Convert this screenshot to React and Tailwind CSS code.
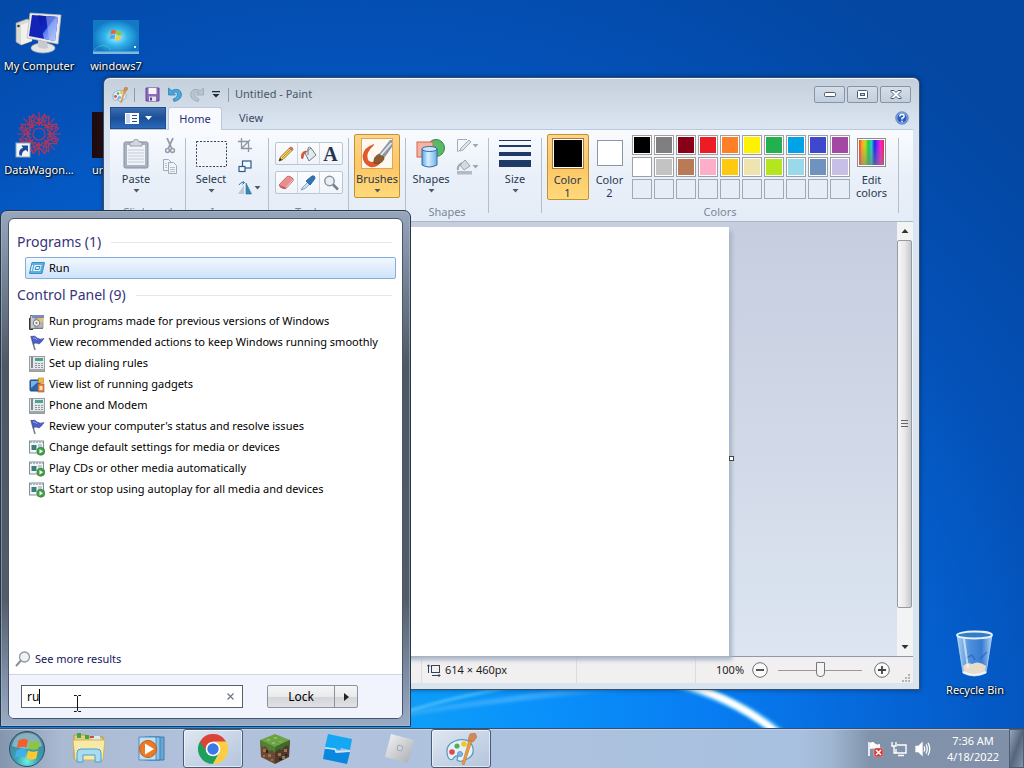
import React, { useState } from "react";

const topColors = ["#000000", "#7f7f7f", "#880015", "#ed1c24", "#ff7f27", "#fff200", "#22b14c", "#00a2e8", "#3f48cc", "#a349a4"];
const midColors = ["#ffffff", "#c3c3c3", "#b97a57", "#ffaec9", "#ffc90e", "#efe4b0", "#b5e61d", "#99d9ea", "#7092be", "#c8bfe7"];

const results = [
  { icon: "compat", text: "Run programs made for previous versions of Windows" },
  { icon: "flag", text: "View recommended actions to keep Windows running smoothly" },
  { icon: "phone", text: "Set up dialing rules" },
  { icon: "gadget", text: "View list of running gadgets" },
  { icon: "phone", text: "Phone and Modem" },
  { icon: "flag", text: "Review your computer's status and resolve issues" },
  { icon: "autoplay", text: "Change default settings for media or devices" },
  { icon: "autoplay", text: "Play CDs or other media automatically" },
  { icon: "autoplay", text: "Start or stop using autoplay for all media and devices" },
];

function Wallpaper() {
  return (
    <svg className="absolute inset-0 h-full w-full" viewBox="0 0 1024 728" preserveAspectRatio="none" aria-hidden="true">
      <defs>
        <radialGradient id="glow" gradientUnits="userSpaceOnUse" cx="360" cy="760" r="900">
          <stop offset="0" stopColor="#10a4f6" />
          <stop offset=".18" stopColor="#0a94fb" />
          <stop offset=".4" stopColor="#087cf2" />
          <stop offset=".62" stopColor="#0562d2" />
          <stop offset=".8" stopColor="#0450b6" />
          <stop offset="1" stopColor="#0347a2" />
        </radialGradient>
        <filter id="soft"><feGaussianBlur stdDeviation="1.4" /></filter>
        <linearGradient id="streak" x1="0" y1="0" x2="1" y2="0">
          <stop offset="0" stopColor="#fff" stopOpacity=".1" />
          <stop offset=".5" stopColor="#fff" stopOpacity=".2" />
          <stop offset="1" stopColor="#fff" stopOpacity="0" />
        </linearGradient>
      </defs>
      <rect width="1024" height="728" fill="url(#glow)" />
      <path d="M400 718 Q500 700 640 690 L560 690 Q480 700 400 712 Z" fill="url(#streak)" filter="url(#soft)" />
      <path d="M405 712 Q450 698 510 687" fill="none" stroke="#8be0ff" strokeWidth="2" opacity=".7" filter="url(#soft)" />
      <path d="M670 682 Q735 697 782 735" fill="none" stroke="#4fc4ff" strokeWidth="11" opacity=".6" filter="url(#soft)" />
      <path d="M672 681 Q735 697 780 735" fill="none" stroke="#fff" strokeWidth="7" filter="url(#soft)" />
    </svg>
  );
}

function ComputerIcon() {
  return (
    <svg width="48" height="44" viewBox="0 0 48 44">
      <defs>
        <linearGradient id="scr" x1="0" y1="0" x2="1" y2="1">
          <stop offset="0" stopColor="#0a19a0" /><stop offset=".45" stopColor="#1226c4" /><stop offset=".5" stopColor="#5b7cf0" /><stop offset="1" stopColor="#c3d4ff" />
        </linearGradient>
      </defs>
      <path d="M1 13 L12 9 L17 11 V31 L6 35 L1 32Z" fill="#d9dad6" stroke="#8b8f94" strokeWidth=".7" />
      <path d="M6 15 L17 11 V31 L6 35Z" fill="#f2f1ec" />
      <circle cx="3.5" cy="16" r="1.3" fill="#3a3a3a" />
      <ellipse cx="28" cy="38" rx="12" ry="5" fill="#e3e4e6" stroke="#a4a8ae" strokeWidth=".7" />
      <path d="M23 30 L32 31 L33 38 Q28 40 23 37Z" fill="#c8cace" />
      <path d="M15 3 L46 5 L43 34 L12 28Z" fill="#eceae4" stroke="#b5b7ba" strokeWidth=".7" />
      <path d="M17 5 L43 7 L40 31 L14 26Z" fill="#1424b8" />
      <path d="M23 5.500 L43 7 L40 31 L29 29Z" fill="url(#scr)" />
      <path d="M31 6 L43 7 L40 31 L34 30Z" fill="#aec4fb" opacity=".5" />
    </svg>
  );
}

function WinFlag({ x = 0, y = 0, s = 1 }) {
  return (
    <g transform={`translate(${x} ${y}) scale(${s})`}>
      <path d="M2 3 Q6 0 10 2.500 L8.800 9 Q5 7 .8 9.500Z" fill="#f2602b" />
      <path d="M11.500 3 Q16 5 20 3 L18.500 10 Q14.500 11.500 10.300 9.500Z" fill="#8cc63f" />
      <path d="M.5 11 Q5 8.500 8.500 10.800 L7.300 17 Q3.500 15 -1 17.500Z" fill="#3fb0ee" />
      <path d="M10 11.300 Q14 13.300 18.200 11.500 L16.800 18 Q13 20 8.700 17.700Z" fill="#fdc92d" />
    </g>
  );
}

function WinPictureIcon() {
  return (
    <svg width="46" height="34" viewBox="0 0 46 34">
      <defs>
        <radialGradient id="w7"><stop offset="0" stopColor="#b8f4ff" /><stop offset=".5" stopColor="#32b4ea" /><stop offset="1" stopColor="#1279c4" /></radialGradient>
      </defs>
      <rect width="46" height="34" fill="url(#w7)" />
      <rect y="31.500" width="46" height="2.500" fill="#7fb9dd" />
      <path d="M0 31 Q10 20 18 30" fill="none" stroke="#7fe" opacity=".3" />
      <WinFlag x={17} y={9} s={0.6} />
      <rect x="41" y="26" width="2" height="2" fill="#d8f0fa" />
    </svg>
  );
}

function DataWagonIcon() {
  const petals = [0, 45, 90, 135, 180, 225, 270, 315];
  return (
    <svg width="52" height="50" viewBox="0 0 52 50">
      <g fill="none" stroke="#b0365a" strokeWidth="1.200">
        {petals.map((a) => (
          <g key={a} transform={`rotate(${a} 26 26)`}>
            <path d="M26 13 L20 6 M26 13 L32 6 M26 4 V18 M21 10 L16 8 M31 10 L36 8" />
            <path d="M26 16 L18 12 L20 20 M26 16 L34 12" />
            <path d="M22 18 Q26 10 30 18" />
          </g>
        ))}
        <circle cx="26" cy="26" r="6" />
      </g>
      <rect x="3" y="35" width="14" height="14" fill="#f2f5f8" stroke="#9aa7b5" />
      <path d="M6.500 47.500 Q5 41 10 40 L8.500 37.500 H15 V44 L13 42 Q8.500 43 9 47.500Z" fill="#1a4a9c" />
    </svg>
  );
}

function BinIcon() {
  return (
    <svg width="40" height="48" viewBox="0 0 40 48">
      <defs>
        <linearGradient id="bin" x1="0" x2="1"><stop offset="0" stopColor="#d5ebfa" stopOpacity=".8" /><stop offset=".35" stopColor="#6ea8e4" stopOpacity=".7" /><stop offset=".7" stopColor="#4b8ad6" stopOpacity=".7" /><stop offset="1" stopColor="#d8ecfb" stopOpacity=".85" /></linearGradient>
      </defs>
      <path d="M2 5 L8 43 Q19 49 31 43 L37 5Z" fill="url(#bin)" stroke="#b5d8f2" strokeWidth=".8" />
      <path d="M8 36 Q12 32 17 34 Q24 30 31 36 L30 43 Q19 48 9 43Z" fill="#e5dccb" />
      <path d="M11 28 L17 25 L20 30 M25 29 L32 22" stroke="#2f60c0" strokeWidth="1.500" fill="none" opacity=".7" />
      <path d="M8 42 Q19 48 31 42" fill="none" stroke="#ecf6fc" strokeWidth="2" />
      <path d="M9 9 L13 38" stroke="#fff" opacity=".6" strokeWidth="2" />
      <ellipse cx="19.500" cy="5" rx="17.500" ry="3.500" fill="#347cc4" stroke="#e2f1fa" strokeWidth="1.800" />
    </svg>
  );
}

function DesktopIcon({ place, label, children }) {
  return (
    <button className={`absolute flex flex-col gap-1 text-[11px] leading-4 whitespace-nowrap text-white [text-shadow:1px_1px_2px_#000,0_0_2px_#000] ${place}`}>
      <span className="flex h-12 items-end">{children}</span>
      {label}
    </button>
  );
}

function Palette({ size = 20 }) {
  return (
    <svg width={size} height={size} viewBox="0 0 32 32">
      <path d="M3 24 Q-1 12 10 8 Q22 4 27 12 Q31 22 22 26 Q15 30 12 27 L13 23 Q10 22 8 26 Q5 28 3 24Z" fill="#e4f1fa" stroke="#5c98b8" strokeWidth="1.200" />
      <circle cx="7" cy="19" r="2.800" fill="#dd4b46" />
      <circle cx="12" cy="13" r="2.600" fill="#51b05a" />
      <circle cx="19" cy="11" r="2.800" fill="#efc62c" />
      <circle cx="15" cy="21" r="2.600" fill="#7eb3e6" stroke="#4a82b8" strokeWidth=".6" />
      <path d="M27 8 L19 32 L17 31 L24 7Z" fill="#ec9a3c" stroke="#b9702a" strokeWidth=".5" />
      <path d="M23 7 L25 1 L30 0 L32 4 L28 9Z" fill="#d58a55" stroke="#a9633a" strokeWidth=".5" />
    </svg>
  );
}

function Down({ className = "" }) {
  return <svg className={className} width="7" height="4" viewBox="0 0 7 4"><path d="M.5 0H6.500L3.500 3.500Z" fill="#4b5a70" /></svg>;
}

function TitleBar() {
  const caption = "grid h-[17px] w-[31px] place-items-center rounded-[2px] border border-[#8794a5] bg-gradient-to-b from-[#d3dee9] to-[#c2cedc]";
  return (
    <div className="flex h-[29px] items-center pt-1 pr-0.5 pl-0.5">
      <Palette size={16} />
      <span className="mx-1.5 h-3.5 w-px bg-[#8e9aa8]" />
      <button aria-label="Save" className="mr-2 ml-1">
        <svg width="15" height="15" viewBox="0 0 15 15">
          <path d="M1 1H14V14H1Z" fill="#8d6bb8" stroke="#65458f" />
          <rect x="3.500" y="1" width="8" height="6" fill="#f4f4fb" /><rect x="4" y="9.500" width="7" height="4.500" fill="#dfe5ee" /><rect x="5" y="10.500" width="2" height="3" fill="#5d4385" />
        </svg>
      </button>
      <button aria-label="Undo" className="mr-2">
        <svg width="14" height="15" viewBox="0 0 14 15"><path d="M.5 1V8H7.500L5 5.500Q9.500 4 9.500 8Q9 11 5 12L6 14.500Q13.500 13 13.500 7Q12 0 3.500 3.500Z" fill="#46a8dc" stroke="#2579ab" strokeWidth=".7" /></svg>
      </button>
      <button aria-label="Redo" className="mr-2">
        <svg width="14" height="15" viewBox="0 0 14 15"><path d="M13.500 1V8H6.500L9 5.500Q4.500 4 4.500 8Q5 11 9 12L8 14.500Q.5 13 .5 7Q2 0 10.500 3.500Z" fill="#b9c5d0" stroke="#94a3b2" strokeWidth=".7" /></svg>
      </button>
      <button aria-label="Customize toolbar" className="mr-2">
        <svg width="8" height="7" viewBox="0 0 8 7"><path d="M0 0H8V1.200H0ZM.5 3H7.500L4 6.500Z" fill="#1d2a3c" /></svg>
      </button>
      <span className="mr-1.5 h-3.5 w-px bg-[#8e9aa8]" />
      <h1 className="flex-1 text-[11px] text-[#47566a]">Untitled - Paint</h1>
      <div className="flex gap-0.5">
        <button aria-label="Minimize" className={caption}>
          <svg width="12" height="5" viewBox="0 0 12 5"><rect x=".5" y=".5" width="11" height="4" rx="1" fill="#fff" stroke="#4c5a6f" /></svg>
        </button>
        <button aria-label="Maximize" className={caption}>
          <svg width="11" height="9" viewBox="0 0 11 9"><rect x=".5" y=".5" width="10" height="8" rx="1" fill="#fff" stroke="#4c5a6f" /><rect x="3.500" y="3.500" width="4" height="2" fill="#c7d2df" stroke="#4c5a6f" /></svg>
        </button>
        <button aria-label="Close" className={caption}>
          <svg width="12" height="9" viewBox="0 0 12 9"><path d="M1 .5H4L6 2.500L8 .5H11V1.500L8 4.500L11 7.500V8.500H8L6 6.500L4 8.500H1V7.500L4 4.500L1 1.500Z" fill="#fff" stroke="#4c5a6f" /></svg>
        </button>
      </div>
    </div>
  );
}

function Tabs() {
  return (
    <div className="flex h-[23px] items-stretch border-b border-[#bac9db] text-[11px]">
      <button aria-label="Paint menu" className="flex w-14 items-center justify-center gap-1.5 border border-[#1f4e8c] bg-gradient-to-b from-[#3c6db0] via-[#1b4f98] to-[#2b68b8]">
        <svg width="14" height="11" viewBox="0 0 14 11"><rect width="14" height="11" fill="#fff" /><rect x="1" y="1" width="4" height="9" fill="#c5d6ee" /><path d="M7 2.500H12M7 5.500H12M7 8.500H12" stroke="#27528e" /></svg>
        <svg width="7" height="4" viewBox="0 0 7 4"><path d="M0 0H7L3.500 4Z" fill="#fff" /></svg>
      </button>
      <button className="mx-0.5 -mb-px w-[54px] rounded-t-[3px] border border-b-0 border-[#bac9db] bg-[#f8fafd] text-[#26307a]">Home</button>
      <button className="w-[54px] text-[#3c4a5e]">View</button>
      <button aria-label="Help" className="mr-1 ml-auto self-center">
        <svg width="14" height="14" viewBox="0 0 14 14">
          <circle cx="7" cy="7" r="6.300" fill="#2a5fc0" stroke="#7b9bd0" /><circle cx="7" cy="7" r="5.200" fill="none" stroke="#dce8fa" strokeWidth=".6" />
          <path d="M4.800 5.500Q5 3.300 7 3.300Q9.300 3.400 9.100 5.300Q8.900 6.500 7 7.300V8.600M7 9.800V11.200" fill="none" stroke="#fff" strokeWidth="1.500" />
        </svg>
      </button>
    </div>
  );
}

function Group({ label, width, align = "justify-center", children }) {
  return (
    <section aria-label={label} className={`flex flex-col justify-between ${width}`}>
      <div className={`flex ${align}`}>{children}</div>
      <div className="h-[18px] text-center text-[11px] leading-[18px] text-[#7a8798]">{label}</div>
    </section>
  );
}

function Sep() {
  return <span className="mt-1 mb-2 w-px bg-[#b4bfcd]" />;
}

function BigButton({ label, icon, arrow = true, width = "w-[46px]", active = false }) {
  const look = active ? "border-[#c2922f] bg-gradient-to-b from-[#fcd48a] via-[#fdc766] to-[#ffd97a]" : "border-transparent";
  return (
    <button className={`flex h-16 flex-col items-center rounded-[2px] border text-[11px] leading-[13px] text-[#28394f] ${width} ${look}`}>
      <span className="grid h-[37px] w-full shrink-0 place-items-center">{icon}</span>
      <span>{label}</span>
      {arrow && <Down className="mt-1" />}
    </button>
  );
}

function ToolCell({ name, children }) {
  return <button aria-label={name} className="grid h-[21px] w-[22px] place-items-center">{children}</button>;
}

const toolRow = "flex divide-x divide-[#ccd6e2] rounded-[2px] border border-[#bcc6d3] bg-gradient-to-b from-[#fbfcfe] to-[#f0f4fa]";

function Swatch({ color }) {
  if (!color) return <button aria-label="Empty" className="size-5 border border-[#a0a9b4] bg-[#e6edf6]" />;
  return (
    <button aria-label={color} className="size-5 border border-[#a0a0a0] bg-white p-px">
      <span className="block size-full" style={{ backgroundColor: color }} />
    </button>
  );
}

function Ribbon() {
  return (
    <div className="flex h-[92px] items-stretch border-b border-[#a9b6c6] bg-gradient-to-b from-[#f9fbfe] via-[#eaf0f9] to-[#e4ecf7] pt-1">
      <Group label="Clipboard" width="w-[75px]" align="justify-start">
        <BigButton label="Paste" width="w-[52px]" icon={
          <svg width="26" height="30" viewBox="0 0 26 30">
            <rect x="1" y="3" width="24" height="26" rx="1.500" fill="#a9b2c0" stroke="#858f9f" />
            <rect x="4" y="6" width="18" height="20" fill="#f0f3f8" />
            <path d="M5 11H21M5 14H21M5 17H21M5 20H21M5 23H21" stroke="#c3ccd8" />
            <path d="M7 3H10Q11 0 13 0Q15 0 16 3H19V7H7Z" fill="#d3d8e0" stroke="#858f9f" strokeWidth=".8" />
          </svg>
        } />
        <div className="flex flex-col gap-1 pt-1">
          <button aria-label="Cut">
            <svg width="16" height="16" viewBox="0 0 16 16" fill="none" stroke="#929dac"><path d="M5 0L9.500 10M11 0L6.500 10" strokeWidth="1.800" /><circle cx="5.500" cy="12.500" r="1.900" strokeWidth="1.500" /><circle cx="10.500" cy="12.500" r="1.900" strokeWidth="1.500" /></svg>
          </button>
          <button aria-label="Copy">
            <svg width="16" height="17" viewBox="0 0 16 17" fill="#f1f5fa" stroke="#a0abb9"><path d="M1.500 1.500H6.500L9.500 4.500V12.500H1.500Z" /><path d="M6.500 4.500H11.500L14.500 7.500V15.500H6.500Z" /><path d="M8 9.500H13M8 11.500H13M8 13.500H13M3 5.500H5M3 7.500H5M3 9.500H5" strokeWidth=".7" /></svg>
          </button>
        </div>
      </Group>
      <Sep />
      <Group label="Image" width="w-[82px]" align="justify-start gap-0.5">
        <BigButton label="Select" width="w-[50px]" icon={
          <svg width="31" height="26" viewBox="0 0 31 26"><rect x=".5" y=".5" width="30" height="25" fill="#f2f6fb" stroke="#33415a" strokeDasharray="2 1.500" /></svg>
        } />
        <div className="flex flex-col gap-2 pt-1">
          <button aria-label="Crop">
            <svg width="14" height="14" viewBox="0 0 14 14" fill="none" stroke="#8b96a5" strokeWidth="1.300"><path d="M3.500 0V10.500H14M0 3.500H10.500V14M4 10L12 2" /></svg>
          </button>
          <button aria-label="Resize">
            <svg width="14" height="13" viewBox="0 0 14 13" fill="#f6f9fc" stroke="#2c5b8a" strokeWidth="1.200"><rect x="4.500" y="1" width="8.500" height="7" /><rect x="1" y="6.500" width="6" height="5" /></svg>
          </button>
          <button aria-label="Rotate" className="flex items-center gap-0.5">
            <svg width="14" height="14" viewBox="0 0 14 14"><path d="M6 4V13H0Z" fill="#b9c9d8" /><path d="M8 2V13H13.500Z" fill="#3a86b8" stroke="#2a6b99" strokeWidth=".6" /><path d="M1 4Q2 1 6 1.500M4.500 0L6.500 1.500L4.500 3.500" stroke="#3f72ae" fill="none" /></svg>
            <Down />
          </button>
        </div>
      </Group>
      <Sep />
      <Group label="Tools" width="w-[79px]">
        <div className="flex flex-col gap-1.5 pt-2">
          <div className={toolRow}>
            <ToolCell name="Pencil">
              <svg width="16" height="16" viewBox="0 0 16 16"><path d="M1 15L2.500 11L11.500 2L14 4.500L5 13.500Z" fill="#f5d34c" stroke="#7a5f26" strokeWidth=".8" /><path d="M11.500 2L12.500 1Q15 1 15 3.500L14 4.500Z" fill="#de6f6a" stroke="#944" strokeWidth=".5" /><path d="M1 15L2 12L4 14Z" fill="#222" /><path d="M4 12L12 4" stroke="#c4951f" /></svg>
            </ToolCell>
            <ToolCell name="Fill">
              <svg width="17" height="16" viewBox="0 0 17 16"><path d="M5 7L11 2L16 9L9 15Z" fill="#e4e9ee" stroke="#727c88" /><path d="M8 9V2Q9 0 11 2" fill="none" stroke="#727c88" /><path d="M1 12Q0 6 6 4.500L7 5.500Q4 7 3.500 12Q2.500 14 1 12Z" fill="#d6583c" /></svg>
            </ToolCell>
            <ToolCell name="Text"><span className="font-['Liberation_Serif',serif] text-[20px] leading-4 font-bold text-[#24364e]">A</span></ToolCell>
          </div>
          <div className={toolRow}>
            <ToolCell name="Eraser">
              <svg width="17" height="15" viewBox="0 0 17 15"><path d="M1 10L9 1.500Q10 1 12 1.500L15 3.500Q16 5 15 6L8 13.500Q6 14 4 13Z" fill="#ea8f8e" stroke="#b25f60" strokeWidth=".8" /><path d="M1 10L8 12.500L8 13.500Q5 14 2 12.500Z" fill="#c65f62" /><path d="M8 12.500L15.500 4.500" stroke="#fbd0cd" /></svg>
            </ToolCell>
            <ToolCell name="Pick color">
              <svg width="16" height="16" viewBox="0 0 16 16"><path d="M1 15L3 12L8 7L10 9L5 13.500Z" fill="#cfe3f5" stroke="#5a82ad" strokeWidth=".7" /><path d="M7 5L12 1Q15 0 15 3.500L11 9L10 10L6 6Z" fill="#2f74b5" stroke="#1c4f86" strokeWidth=".7" /></svg>
            </ToolCell>
            <ToolCell name="Magnifier">
              <svg width="16" height="16" viewBox="0 0 16 16"><circle cx="6.500" cy="6" r="4.700" fill="#e9eff5" stroke="#8a949f" strokeWidth="1.500" /><path d="M10 9.500L15 14.500" stroke="#777f88" strokeWidth="2.500" /></svg>
            </ToolCell>
          </div>
        </div>
      </Group>
      <Sep />
      <Group label="" width="w-[56px]">
        <BigButton label="Brushes" active icon={
          <svg width="32" height="31" viewBox="0 0 32 31">
            <rect x=".5" y=".5" width="31" height="30" fill="#fdf9f0" stroke="#d9a85c" />
            <path d="M13 6Q3 9 1.500 18Q2 26 9 29Q17 30 20 24L15 22Q11 26 7 22Q4 15 13 7Z" fill="#e0592a" />
            <path d="M13 25Q12 19 18 16Q24 16 23 21Q20 27 13 25Z" fill="#8c5c2e" stroke="#5c3a1c" strokeWidth=".6" />
            <path d="M18 16L29 2L31 2V9L24 19Z" fill="#8e98a6" /><path d="M20 17L30.500 5" stroke="#e7ebf0" strokeWidth="1.800" />
          </svg>
        } />
      </Group>
      <Sep />
      <Group label="Shapes" width="w-[82px]" align="justify-start">
        <BigButton label="Shapes" width="w-[50px]" icon={
          <svg width="30" height="29" viewBox="0 0 30 29">
            <defs><linearGradient id="cyl" x1="0" x2="1"><stop offset="0" stopColor="#5ba6e4" /><stop offset=".4" stopColor="#d9efff" /><stop offset="1" stopColor="#6cb0e6" /></linearGradient></defs>
            <circle cx="20" cy="9" r="8.500" fill="#58b967" stroke="#2c8a40" />
            <rect x="1" y="3" width="16" height="15" fill="#f4b3a3" stroke="#d4664d" />
            <path d="M6 10V26Q13 30 21 26V10Z" fill="url(#cyl)" stroke="#2f6ba6" />
            <ellipse cx="13.500" cy="10" rx="7.500" ry="2.500" fill="#c9e6fb" stroke="#2f6ba6" />
          </svg>
        } />
        <div className="flex flex-col gap-1.5 pt-1">
          <button aria-label="Outline" className="flex items-center">
            <svg width="16" height="15" viewBox="0 0 16 15" fill="none" stroke="#a3adba"><path d="M11 1.500H1.500V13.500L5 12" /><path d="M5 10L13 2L15 4L7 12L4 13Z" fill="#dde3ea" /></svg>
            <Down className="opacity-50" />
          </button>
          <button aria-label="Fill style" className="flex items-center">
            <svg width="16" height="16" viewBox="0 0 16 16"><path d="M4 6L9 1L14 7L8 11Z" fill="#d5dae1" stroke="#9aa4b1" /><path d="M2 11Q1 7 6 4" stroke="#9aa4b1" fill="none" strokeWidth="2" /><rect x="1" y="12" width="15" height="3.500" fill="#b1bac5" /></svg>
            <Down className="opacity-50" />
          </button>
        </div>
      </Group>
      <Sep />
      <Group label="" width="w-[52px]">
        <BigButton label="Size" icon={
          <svg width="32" height="27" viewBox="0 0 32 27" fill="#1f3a66"><path d="M0 0H32V1H0ZM0 5H32V7H0ZM0 12H32V16H0ZM0 20H32V27H0Z" /></svg>
        } />
      </Group>
      <Sep />
      <Group label="Colors" width="w-[356px]">
        <div className="flex">
          <div className="flex">
            <button className="flex h-[66px] w-[42px] flex-col items-center rounded-[2px] border border-[#c2922f] bg-gradient-to-b from-[#fcd48a] via-[#fdc766] to-[#ffd97a] pt-[3px] text-[11px] leading-[13px] text-[#28394f]">
              <span className="mb-1 size-8 border border-[#a87a35] bg-white p-px"><span className="block size-full bg-black" /></span>
              <span>Color<br />1</span>
            </button>
            <button className="flex h-[66px] w-[42px] flex-col items-center pt-[6px] text-[11px] leading-[13px] text-[#28394f]">
              <span className="mb-[7px] size-[26px] border border-[#8c97a5] bg-white" />
              <span>Color<br />2</span>
            </button>
          </div>
          <div className="ml-px grid grid-cols-10 content-start gap-0.5 pt-px">
            {topColors.map((c) => <Swatch key={c} color={c} />)}
            {midColors.map((c) => <Swatch key={c} color={c} />)}
            {topColors.map((c) => <Swatch key={"e" + c} />)}
          </div>
          <button className="flex w-11 flex-col items-center pt-1 text-[11px] leading-[13px] text-[#28394f]">
            <span className="mb-1.5 size-[29px] border border-[#8c8c8c] bg-white p-px">
              <span className="block size-full bg-[linear-gradient(to_bottom,transparent_20%,#80808090),linear-gradient(to_right,#f33,#fa2,#bd2,#2c4,#2cc,#22e,#92e,#f2c,#e24)]" />
            </span>
            <span>Edit<br />colors</span>
          </button>
        </div>
      </Group>
      <Sep />
    </div>
  );
}

function Canvas() {
  return (
    <div className="flex min-h-0 flex-1">
      <div className="flex flex-1 bg-gradient-to-b from-[#c6cddf] to-[#dce5f1] pt-[5px]">
        <div className="relative ml-1 w-[615px] bg-white shadow-[3px_4px_4px_#a9b4c6]">
          <span className="absolute top-1/2 -right-[5px] mt-3.5 size-[5px] border border-[#444] bg-white" />
        </div>
      </div>
      <div className="flex w-4 flex-col items-start bg-[#f2f3f5]">
        <button aria-label="Scroll up" className="grid h-[18px] w-full place-items-center"><svg width="8" height="4" viewBox="0 0 8 4"><path d="M0.500 4H7.500L4 0Z" fill="#333" /></svg></button>
        <div className="grid h-[368px] w-[15px] place-items-center rounded-[2px] border border-[#969ba3] bg-gradient-to-r from-[#f7f7f7] via-[#e9e9eb] to-[#c6c8cc]">
          <svg width="7" height="8" viewBox="0 0 7 8"><path d="M0 .5H7M0 3.500H7M0 6.500H7" stroke="#666" /></svg>
        </div>
        <button aria-label="Scroll down" className="mt-auto grid h-[18px] w-full place-items-center"><svg width="8" height="4" viewBox="0 0 8 4"><path d="M0.500 0H7.500L4 4Z" fill="#333" /></svg></button>
      </div>
    </div>
  );
}

function ZoomButton({ name, d }) {
  return (
    <button aria-label={name}>
      <svg width="16" height="16" viewBox="0 0 16 16" fill="none"><circle cx="8" cy="8" r="7.300" fill="#fafafa" stroke="#6f6f6f" /><path d={d} stroke="#444" strokeWidth="1.800" /></svg>
    </button>
  );
}

function StatusBar() {
  return (
    <div className="flex h-[27px] items-center border-t border-[#8f98a5] bg-[#f1efef] text-[11px] text-[#1e1e1e]">
      <div className="h-full w-[312px] border-r border-[#dcdcdc]" />
      <div className="flex h-full w-[155px] items-center gap-1 border-r border-[#dcdcdc] pl-[5px]">
        <svg width="14" height="13" viewBox="0 0 14 13" fill="none" stroke="#33415a"><rect x="4.500" y="1.500" width="8" height="7" /><path d="M1.500 9V1M0 2.500L1.500 .8L3 2.500M5 11.500H13M11.500 10L13 11.500L11.500 13" /></svg>
        614 × 460px
      </div>
      <div className="h-full flex-1 border-r border-[#dcdcdc]" />
      <div className="flex h-full w-[217px] items-center pl-5">
        <span className="w-9">100%</span>
        <ZoomButton name="Zoom out" d="M4 8H12" />
        <input
          type="range"
          aria-label="Zoom"
          defaultValue="50"
          className="mr-3 ml-2.5 h-4 w-[84px] appearance-none bg-transparent [&::-webkit-slider-runnable-track]:h-px [&::-webkit-slider-runnable-track]:bg-[#999] [&::-webkit-slider-thumb]:-mt-2 [&::-webkit-slider-thumb]:h-[15px] [&::-webkit-slider-thumb]:w-[9px] [&::-webkit-slider-thumb]:appearance-none [&::-webkit-slider-thumb]:rounded-b-[4px] [&::-webkit-slider-thumb]:border [&::-webkit-slider-thumb]:border-[#777] [&::-webkit-slider-thumb]:bg-[#f4f4f4]"
        />
        <ZoomButton name="Zoom in" d="M4 8H12M8 4V12" />
        <svg className="mr-0.5 ml-auto self-end" width="10" height="10" viewBox="0 0 10 10" fill="#b3b3b3"><path d="M7 1H9V3H7ZM4 4H6V6H4ZM7 4H9V6H7ZM1 7H3V9H1ZM4 7H6V9H4ZM7 7H9V9H7Z" /></svg>
      </div>
    </div>
  );
}

function PaintWindow() {
  return (
    <main className="absolute top-[77px] left-[103px] flex h-[613px] w-[817px] flex-col rounded-t-[7px] border border-[#36506f] bg-gradient-to-b from-[#c3cfda] via-[#dbe5f2] via-8% to-[#d8e4ee] px-1.5 pb-1.5 shadow-[inset_0_1px_0_#eef4fa,0_0_5px_#0006]">
      <TitleBar />
      <Tabs />
      <Ribbon />
      <Canvas />
      <StatusBar />
    </main>
  );
}

function ResultIcon({ kind }) {
  return (
    <svg className="shrink-0" width="16" height="16" viewBox="0 0 16 16">
      {kind === "run" && <>
        <path d="M3 2.500H15.500L13 13.500H.5Z" fill="#5fb0e0" stroke="#3a8cc4" />
        <path d="M5.500 5H12.500L11 11H4Z" fill="#e4f5fd" /><path d="M7 6.500H11L10 9.500H6Z" fill="none" stroke="#3a8cc4" /><path d="M3.500 5L2.300 11" stroke="#fff" />
      </>}
      {kind === "compat" && <>
        <rect x="1.500" y="1.500" width="12" height="13" fill="#c8c9cc" stroke="#74777c" /><rect x="3" y="1" width="12" height="3" fill="#7a8cbb" />
        <path d="M6 4H14V14H6Z" fill="#b7b7b8" stroke="#808184" strokeWidth=".7" /><path d="M9 4H14V8H9Z" fill="#e7c069" /><circle cx="7.500" cy="9" r="3.300" fill="#eceef1" stroke="#777" /><circle cx="7.500" cy="9" r="1" fill="#777" /><path d="M.5 4V15.500H4" stroke="#333" fill="none" />
      </>}
      {kind === "flag" && <>
        <path d="M2 1L6 15" stroke="#7b8392" strokeWidth="1.600" /><path d="M2.500 1.500Q6 0 8 3Q11 5 15 3.500Q13 7 10 9Q6 7 4.500 9.500Z" fill="#4c5fc7" stroke="#35469c" strokeWidth=".6" /><path d="M4 3Q6 2 8 5" stroke="#9aa9ef" fill="none" />
      </>}
      {kind === "phone" && <>
        <rect x=".5" y=".5" width="15" height="15" fill="#e3e7e9" stroke="#969ca0" /><path d="M2 1H4V12H2Z" fill="#7e888e" /><rect x="6" y="2" width="8" height="3" fill="#4ea38f" />
        <path d="M6 7.500H14M6 9.500H14M6 11.500H14" stroke="#8d979d" strokeDasharray="2 1" /><path d="M1 14H15" stroke="#8b9296" strokeWidth="1.500" />
      </>}
      {kind === "gadget" && <>
        <rect x="1" y="3" width="10" height="11" rx="1" fill="#2a66ae" stroke="#1c487f" /><path d="M2 4H10L2 11Z" fill="#78b3e3" /><rect x="9.500" y="1" width="5" height="5" fill="#f0b93b" stroke="#b9852a" strokeWidth=".6" />
        <rect x="9" y="7" width="6" height="8" fill="#e58246" stroke="#a95724" strokeWidth=".6" /><rect x="10.500" y="9" width="3" height="4" fill="#fbe3c6" />
      </>}
      {kind === "autoplay" && <>
        <rect x=".5" y="1" width="14" height="12" fill="#f2f5f7" stroke="#858f98" /><path d="M1 2H14" stroke="#a8b4bf" strokeWidth="2" strokeDasharray="2 1" /><rect x="2.500" y="5" width="5" height="5" fill="#3c7e7a" />
        <path d="M9 5H13M9 7H13" stroke="#94a1a9" /><circle cx="11.800" cy="11.300" r="4" fill="#42a147" stroke="#2b7a30" strokeWidth=".6" /><path d="M10.500 9L14 11.300L10.500 13.600Z" fill="#fff" />
      </>}
    </svg>
  );
}

function Heading({ children }) {
  return (
    <h2 className="flex items-center gap-2.5 pr-2.5 pl-2 text-[14px] leading-5 text-[#35357a]">
      {children}
      <span className="h-px flex-1 bg-[#e3e6ec]" />
    </h2>
  );
}

function StartMenu() {
  const [query, setQuery] = useState("ru");
  return (
    <aside className="absolute bottom-px left-0 flex h-[517px] w-[411px] rounded-t-[7px] border border-[#26364d] bg-[linear-gradient(to_bottom,#97a6bb,#7c8b9f_10%,#4e5863_30%,#525c68_75%,#7d8da3_90%,#9aabc5)] p-[7px] shadow-[inset_0_0_0_1px_#b4c0cf80]">
      <div className="flex flex-1 flex-col overflow-hidden rounded-[6px] border border-[#46566c] bg-white">
        <div className="flex flex-1 flex-col pt-[13px]">
          <Heading>Programs (1)</Heading>
          <button className="mx-1.5 mt-[5px] mb-1.5 ml-4 flex h-[22px] items-center gap-1 rounded-[2px] border border-[#84acdd] bg-gradient-to-b from-[#f1f7fe] to-[#cfe3fa] pl-[3px] text-[11px] text-black">
            <ResultIcon kind="run" />Run
          </button>
          <Heading>Control Panel (9)</Heading>
          <ul className="mt-1.5 pl-5 text-[11px] text-black">
            {results.map((r) => (
              <li key={r.text}>
                <button className="flex h-[21px] items-center gap-1 whitespace-nowrap"><ResultIcon kind={r.icon} />{r.text}</button>
              </li>
            ))}
          </ul>
          <button className="mt-auto mb-[5px] flex items-center gap-1 pl-1.5 text-[11px] leading-5 text-[#14145e]">
            <svg width="16" height="16" viewBox="0 0 16 16"><circle cx="9.500" cy="6" r="5" fill="#eef2f6" stroke="#9298a0" strokeWidth="1.300" /><path d="M6 9.500L1 15" stroke="#8a8f97" strokeWidth="2" /></svg>
            See more results
          </button>
        </div>
        <div className="flex h-11 items-center border-t border-[#cfd5e0] bg-[#f1f4fc] pl-3">
          <label className="flex h-[23px] w-[222px] items-center border border-[#5c5f66] bg-white pr-2 pl-[5px] text-[12px]">
            <input aria-label="Search" value={query} onChange={(e) => setQuery(e.target.value)} className="[field-sizing:content] text-black outline-none" />
            <span className="h-[15px] w-px bg-black" />
            <button aria-label="Clear" className="ml-auto"><svg width="7" height="7" viewBox="0 0 7 7"><path d="M.5 .5L6.500 6.500M6.500 .5L.5 6.500" stroke="#6b7684" strokeWidth="1.200" /></svg></button>
          </label>
          <div className="ml-6 flex h-[23px] w-[91px] divide-x divide-[#8d929b] rounded-[2px] border border-[#8d929b] bg-[linear-gradient(to_bottom,#f5f5f6,#e9eaec_50%,#d3d5d9_52%,#dfe1e4)] text-[12px] text-black">
            <button className="w-[67px]">Lock</button>
            <button aria-label="More options" className="grid flex-1 place-items-center"><svg width="5" height="8" viewBox="0 0 5 8"><path d="M0 0L5 4L0 8Z" fill="#222" /></svg></button>
          </div>
        </div>
      </div>
    </aside>
  );
}

function TaskButton({ name, active, children }) {
  return (
    <button
      aria-label={name}
      className={`grid h-full w-[60px] shrink-0 place-items-center rounded-[3px] border ${active ? "border-[#4a5b75] bg-gradient-to-br from-[#dfe7f2] to-[#b3c4dc] shadow-[inset_0_0_0_1px_#ffffff90]" : "border-transparent"}`}
    >
      {children}
    </button>
  );
}

function Taskbar() {
  return (
    <footer className="relative flex h-10 items-stretch border-t border-[#33506f] bg-[linear-gradient(to_right,#8496ad,#a9bad2_6%,#b2c1dc_20%,#adc2de_50%,#a8c1e0_78%,#a1b7d3_81%,#8193ab_85%,#8090a8)] shadow-[inset_0_1px_0_#d5e0ee90]">
      <button aria-label="Start" className="grid w-[54px] place-items-center">
        <svg width="38" height="38" viewBox="0 0 38 38">
          <defs><radialGradient id="orb" cx=".5" cy=".85" r=".8"><stop offset="0" stopColor="#6ff0e0" /><stop offset=".4" stopColor="#38a0b0" /><stop offset="1" stopColor="#4d7f98" /></radialGradient></defs>
          <circle cx="19" cy="19" r="17.500" fill="url(#orb)" stroke="#2d4f66" />
          <path d="M4 16Q7 3 19 3Q31 3 34 16Q19 22 4 16Z" fill="#fff" opacity=".35" />
          <WinFlag x={8} y={7} s={1.200} />
        </svg>
      </button>
      <div className="flex flex-1 gap-0.5 pl-[5px]">
        <TaskButton name="Windows Explorer">
          <svg width="34" height="31" viewBox="0 0 34 31">
            <path d="M2 2H14L16 4H31V26H2Z" fill="#e8cf75" stroke="#b9963e" /><path d="M5 0H9V5H5ZM13 2H17V6H13Z" fill="#3fa64c" /><rect x="20" y="3" width="8" height="4" fill="#dfe9f2" /><rect x="18" y="3" width="4" height="2" fill="#c84f4f" />
            <path d="M1 7H33L31 27H3Z" fill="#f7e9a7" stroke="#cdb261" />
            <path d="M5 29V20Q5 16 9 16H25Q29 16 29 20V29H23V22H11V29Z" fill="#a9dcf2" stroke="#4a9ecb" />
          </svg>
        </TaskButton>
        <TaskButton name="Media Player">
          <svg width="29" height="27" viewBox="0 0 29 27">
            <path d="M12 2H27V25H12Z" fill="#6aa6d4" stroke="#3f7fb4" /><path d="M8 2H23V25H8Z" fill="#8fc0e4" stroke="#3f7fb4" /><path d="M2 2H19V25H2Z" fill="#bfe0f5" stroke="#4d8dbf" />
            <circle cx="11" cy="14" r="8.500" fill="#ea7b27" stroke="#c25e14" /><path d="M8 8.500L17 14L8 19.500Z" fill="#fff" />
          </svg>
        </TaskButton>
        <TaskButton name="Chrome" active>
          <svg width="30" height="30" viewBox="0 0 30 30">
            <path d="M15 15L2 7.500A15 15 0 0 0 15 30L21.500 18.500Z" fill="#1da05b" /><path d="M15 15L21.500 18.500L15 30A15 15 0 0 0 28 7.500H15Z" fill="#ffcd42" />
            <path d="M2 7.500A15 15 0 0 1 28 7.500H15L9 18Z" fill="#db4437" />
            <circle cx="15" cy="15" r="7.300" fill="#fff" /><circle cx="15" cy="15" r="5.700" fill="#3b79e6" />
          </svg>
        </TaskButton>
        <TaskButton name="Minecraft">
          <svg width="32" height="32" viewBox="0 0 32 32">
            <path d="M1 7L16 1L31 7L16 14Z" fill="#6ba345" /><path d="M1 7L16 14V31L2 24Z" fill="#6b4a35" /><path d="M31 7L16 14V31L30 24Z" fill="#51382a" />
            <path d="M1 7L16 14V20L13 17L10 18L7 13L4 14L1 11Z" fill="#4f8432" /><path d="M31 7L16 14V19L20 16L23 17L26 13L31 12Z" fill="#3d6c28" />
            <path d="M4 16h3v3H4zM9 21h3v3H9zM4 22h2v2H4zM12 26h2v2h-2zM19 20h3v3h-3zM25 16h3v3h-3zM23 23h3v3h-3z" fill="#9a7352" /><path d="M7 17h2v3H7zM20 25h3v2h-3zM26 21h2v2h-2z" fill="#2d211b" />
            <path d="M8 6h3v2H8zM15 4h3v2h-3zM20 8h3v1h-3zM13 9h3v2h-3z" fill="#8abd5c" />
          </svg>
        </TaskButton>
        <TaskButton name="Roblox Studio">
          <svg width="31" height="32" viewBox="0 0 31 32">
            <path d="M6 1L30 6L28 17L19 15L18 17L3 14Z" fill="#13a7f4" /><path d="M3 15L13 17L14 20L28 19L25 31L1 26Z" fill="#0a88e0" />
            <path d="M3 15L13 16L14 19L28 18" stroke="#c7e7fa" fill="none" strokeWidth="1.400" />
          </svg>
        </TaskButton>
        <TaskButton name="Roblox">
          <svg width="31" height="31" viewBox="0 0 31 31">
            <defs><linearGradient id="rbx" x1="0" y1="0" x2="1" y2="1"><stop offset="0" stopColor="#f5f5f5" /><stop offset="1" stopColor="#a8acb1" /></linearGradient></defs>
            <path d="M7 1L30 7L24 30L1 24Z" fill="url(#rbx)" /><path d="M14 12L19 13.500L17.500 18L13 17Z" fill="#d3d6d9" stroke="#a5a9ae" />
          </svg>
        </TaskButton>
        <TaskButton name="Paint" active><Palette size={32} /></TaskButton>
      </div>
      <div className="flex items-center gap-2 pr-1.5">
        <svg width="16" height="16" viewBox="0 0 16 16"><path d="M2 1V15" stroke="#fff" strokeWidth="1.600" /><path d="M3 2Q6 0 8 2.500Q10 4 13 3V9Q10 10 8 8Q6 7 3 8Z" fill="#fff" /><rect x="7" y="7" width="9" height="9" rx="2" fill="#d33a35" stroke="#f1b5b0" strokeWidth=".6" /><path d="M9 9L14 14M14 9L9 14" stroke="#fff" strokeWidth="1.500" /></svg>
        <svg width="16" height="16" viewBox="0 0 16 16" fill="none" stroke="#fff" strokeWidth="1.400"><path d="M6 4H15V12H5V8M7 14.500H13" /><path d="M1 1V5H5V1M3 5V12H5" /></svg>
        <svg width="16" height="16" viewBox="0 0 16 16" fill="none" stroke="#fff" strokeWidth="1.300"><path d="M1 5.500H3.500L7 2V14L3.500 10.500H1Z" fill="#fff" /><path d="M9 5.500Q10.500 8 9 10.500M11 3.500Q13.500 8 11 12.500M13 1.800Q16.500 8 13 14.200" /></svg>
      </div>
      <div className="flex w-[72px] flex-col justify-center text-center text-[11px] leading-4 text-white">
        <span>7:36 AM</span>
        <span>4/18/2022</span>
      </div>
      <button aria-label="Show desktop" className="w-[15px] border border-[#4d5d73] bg-gradient-to-br from-[#97a7bd] via-[#57667b] to-[#8596ae]" />
    </footer>
  );
}

export default function App() {
  return (
    <div className="flex h-screen min-h-[600px] w-full flex-col overflow-hidden bg-[#0a5fc4] font-['Noto_Sans','Open_Sans',sans-serif]">
      <div className="relative flex-1 overflow-hidden">
        <Wallpaper />
        <DesktopIcon place="top-1.5 left-0 w-[78px] items-center" label="My Computer"><ComputerIcon /></DesktopIcon>
        <DesktopIcon place="top-1.5 left-[77px] w-[78px] items-center" label="windows7"><WinPictureIcon /></DesktopIcon>
        <DesktopIcon place="top-[110px] left-0 w-[78px] items-center" label="DataWagon..."><DataWagonIcon /></DesktopIcon>
        <DesktopIcon place="top-[110px] left-[92px] items-start" label="ur"><span className="h-[46px] w-[46px] bg-gradient-to-r from-[#1a0a0e] to-[#5a1a1e]" /></DesktopIcon>
        <DesktopIcon place="right-[10px] bottom-[30px] w-[78px] items-center" label="Recycle Bin"><BinIcon /></DesktopIcon>
        <PaintWindow />
        <StartMenu />
        <svg className="absolute bottom-4 left-[73px]" width="9" height="17" viewBox="0 0 9 17" fill="none" stroke="#111"><path d="M1 .5H3.500L4.500 1.500L5.500 .5H8M4.500 1.500V15.500M1 16.500H3.500L4.500 15.500L5.500 16.500H8" /></svg>
      </div>
      <Taskbar />
    </div>
  );
}
